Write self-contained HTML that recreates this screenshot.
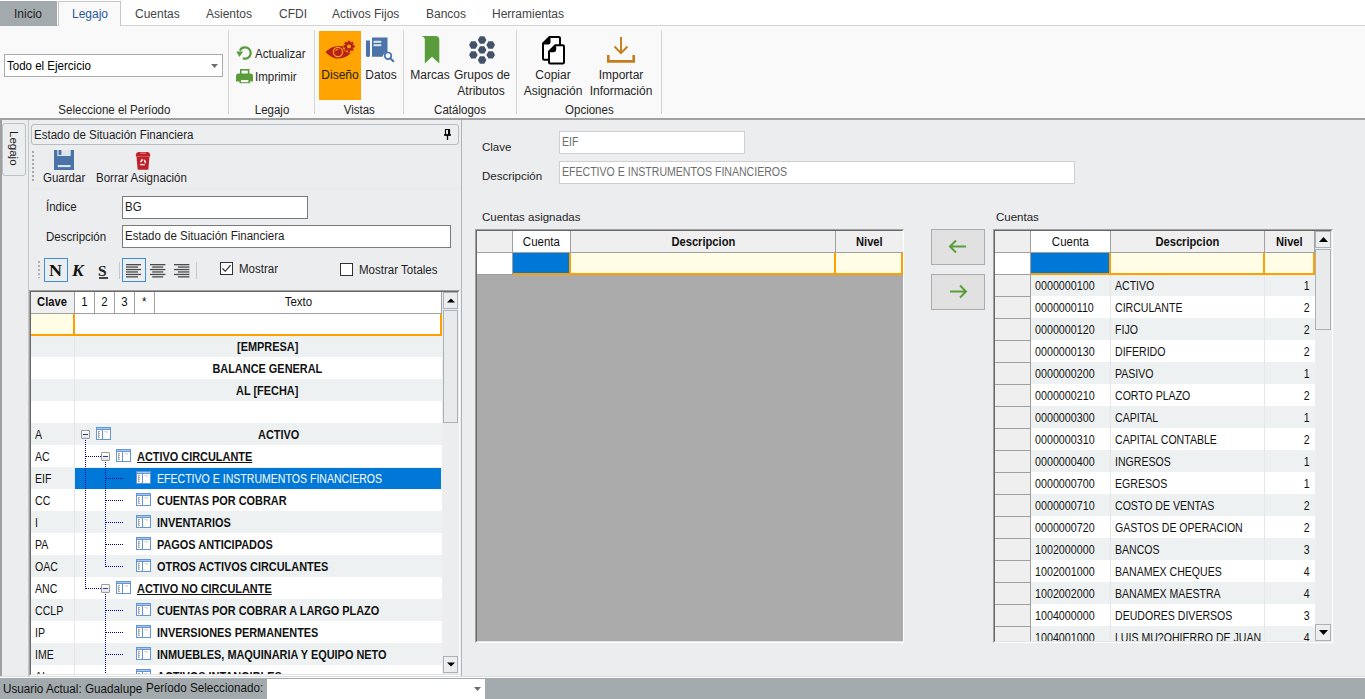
<!DOCTYPE html>
<html><head><meta charset="utf-8">
<style>
*{margin:0;padding:0;box-sizing:border-box}
html,body{width:1365px;height:699px;overflow:hidden;background:#ecedef;font-family:"Liberation Sans",sans-serif;font-size:11.5px;color:#000}
.a{position:absolute;white-space:nowrap}
.t{position:absolute;white-space:nowrap;line-height:14px}
</style></head><body>
<!-- TAB STRIP -->
<div class="a" style="left:0;top:0;width:1365px;height:26px;background:#fff"></div>
<div class="a" style="left:0;top:25px;width:1365px;height:1px;background:#d4d4d4"></div>
<div class="a" style="left:0;top:1px;width:57px;height:25px;background:#a3aaad"></div>
<div class="t" style="left:14px;top:7px;color:#1e1e1e;font-size:12px">Inicio</div>
<div class="a" style="left:58px;top:1px;width:63px;height:26px;background:#f9f9f9;border:1px solid #c6c6c6;border-bottom:none"></div>
<div class="t" style="left:72px;top:7px;color:#2b579a;font-size:12px">Legajo</div>
<div class="t" style="left:135px;top:7px;color:#444;font-size:12px">Cuentas</div>
<div class="t" style="left:206px;top:7px;color:#444;font-size:12px">Asientos</div>
<div class="t" style="left:279px;top:7px;color:#444;font-size:12px">CFDI</div>
<div class="t" style="left:332px;top:7px;color:#444;font-size:12px">Activos Fijos</div>
<div class="t" style="left:426px;top:7px;color:#444;font-size:12px">Bancos</div>
<div class="t" style="left:492px;top:7px;color:#444;font-size:12px">Herramientas</div>

<!-- RIBBON -->
<div class="a" style="left:0;top:26px;width:1365px;height:92px;background:#f9f9f9"></div>
<div class="a" style="left:0;top:118px;width:1365px;height:2px;background:#a0a0a0"></div>

<!-- ribbon group 1 -->
<div class="a" style="left:4px;top:54px;width:219px;height:23px;background:#fff;border:1px solid #ababab"></div>
<div class="t" style="left:7px;top:59px;font-size:12px"><span style="display:inline-block;transform:scaleX(0.96);transform-origin:0 0">Todo el Ejercicio</span></div>
<svg class="a" style="left:211px;top:64px" width="7" height="4"><path d="M0 0H7L3.5 4Z" fill="#6d6d6d"/></svg>
<div class="t" style="left:0;width:228px;text-align:center;top:103px;color:#262626;font-size:12px"><span style="display:inline-block;transform:scaleX(0.96);transform-origin:50% 0">Seleccione el Período</span></div>
<div class="a" style="left:228px;top:30px;width:1px;height:84px;background:#d5d5d5"></div>
<!-- group 2 -->
<svg class="a" style="left:236px;top:45px" width="17" height="16" viewBox="0 0 17 16"><path d="M3.83 5.59A5.7 5.7 0 1 1 6.81 13.26" fill="none" stroke="#5a9b3c" stroke-width="2.2"/><path d="M0.3 6.6H7.2L3.4 11.9Z" fill="#5a9b3c"/></svg>
<div class="t" style="left:255px;top:47px;color:#262626;font-size:12px"><span style="display:inline-block;transform:scaleX(0.96);transform-origin:0 0">Actualizar</span></div>
<svg class="a" style="left:236px;top:68px" width="17" height="16" viewBox="0 0 17 16"><rect x="4.8" y="1.8" width="7.8" height="5" fill="none" stroke="#5a9b3c" stroke-width="1.6"/><path d="M0 8Q0 5.6 2.4 5.6H14.6Q17 5.6 17 8V13.5H0Z" fill="#5a9b3c"/><rect x="3.5" y="10.8" width="10.5" height="4.4" fill="#5a9b3c"/><rect x="5" y="12" width="7.4" height="2.2" fill="#f9f9f9"/></svg>
<div class="t" style="left:255px;top:70px;color:#262626;font-size:12px"><span style="display:inline-block;transform:scaleX(0.96);transform-origin:0 0">Imprimir</span></div>
<div class="t" style="left:229px;width:86px;text-align:center;top:103px;color:#262626;font-size:12px"><span style="display:inline-block;transform:scaleX(0.96);transform-origin:50% 0">Legajo</span></div>
<div class="a" style="left:314px;top:30px;width:1px;height:84px;background:#d5d5d5"></div>
<!-- group 3 -->
<div class="a" style="left:319px;top:31px;width:42px;height:69px;background:#ffa400"></div>
<svg class="a" style="left:318px;top:32px" width="43" height="34" viewBox="0 0 43 34"><path d="M7.5 20C12 15.5 17 14 22 14C26 14 29 15.5 30 17L32.5 21.5C28 25.5 23 26.8 19.5 26.6C15 26.4 10.5 23.5 7.5 20Z" fill="#b5211f"/><circle cx="20" cy="20" r="4.6" fill="none" stroke="#ffa400" stroke-width="1.3"/><path d="M17.6 19.2A2.6 2.6 0 0 1 20.2 17.2" fill="none" stroke="#ffa400" stroke-width="1"/><circle cx="31" cy="14.4" r="6.2" fill="#ffa400"/><g fill="#b5211f"><rect x="29.7" y="8.8" width="2.6" height="3" transform="rotate(0 31 14.4)"/><rect x="29.7" y="8.8" width="2.6" height="3" transform="rotate(45 31 14.4)"/><rect x="29.7" y="8.8" width="2.6" height="3" transform="rotate(90 31 14.4)"/><rect x="29.7" y="8.8" width="2.6" height="3" transform="rotate(135 31 14.4)"/><rect x="29.7" y="8.8" width="2.6" height="3" transform="rotate(180 31 14.4)"/><rect x="29.7" y="8.8" width="2.6" height="3" transform="rotate(225 31 14.4)"/><rect x="29.7" y="8.8" width="2.6" height="3" transform="rotate(270 31 14.4)"/><rect x="29.7" y="8.8" width="2.6" height="3" transform="rotate(315 31 14.4)"/></g><circle cx="31" cy="14.4" r="4.2" fill="#b5211f"/><circle cx="31" cy="14.4" r="1.9" fill="#ffa400"/></svg>
<div class="t" style="left:290px;width:100px;text-align:center;top:68px;font-size:12px;color:#1e1e1e">Diseño</div>
<svg class="a" style="left:364px;top:36px" width="32" height="28" viewBox="0 0 32 28"><path d="M2 4.5H6V19.5Q6 21 4 21Q2 21 2 19.5Z" fill="#4a74a8"/><path d="M8 1.5H23.5V16.5A5.5 5.5 0 0 0 18.5 20.7H8Z" fill="#4a74a8"/><rect x="9.5" y="4.8" width="7.8" height="2" fill="#dfe6ef"/><rect x="9.5" y="8.2" width="7.8" height="2" fill="#dfe6ef"/><circle cx="24" cy="19.8" r="3.3" fill="none" stroke="#4a74a8" stroke-width="1.7"/><path d="M26.3 22.2L29.3 25.3" stroke="#4a74a8" stroke-width="2" stroke-linecap="round"/></svg>
<div class="t" style="left:331px;width:100px;text-align:center;top:68px;font-size:12px;color:#262626">Datos</div>
<div class="t" style="left:315px;width:88px;text-align:center;top:103px;color:#262626;font-size:12px"><span style="display:inline-block;transform:scaleX(0.96);transform-origin:50% 0">Vistas</span></div>
<div class="a" style="left:403px;top:30px;width:1px;height:84px;background:#d5d5d5"></div>
<!-- group 4 -->
<svg class="a" style="left:418px;top:33px" width="24" height="33" viewBox="0 0 24 33"><path d="M3 3H17.5Q21.3 3 21.3 6.8V30.5L14 23.8L6.8 30.5V6.5Q6.8 3.6 3 3Z" fill="#5a9b3c"/></svg>
<div class="t" style="left:380px;width:100px;text-align:center;top:68px;font-size:12px;color:#262626">Marcas</div>
<svg class="a" style="left:466px;top:33px" width="32" height="33" viewBox="0 0 32 33"><g fill="#435268"><path d="M11.80 7.00 L13.90 3.30 L18.30 3.30 L20.40 7.00 L18.30 10.70 L13.90 10.70Z"/><path d="M3.10 12.00 L5.20 8.30 L9.60 8.30 L11.70 12.00 L9.60 15.70 L5.20 15.70Z"/><path d="M20.40 12.00 L22.50 8.30 L26.90 8.30 L29.00 12.00 L26.90 15.70 L22.50 15.70Z"/><path d="M11.80 16.90 L13.90 13.20 L18.30 13.20 L20.40 16.90 L18.30 20.60 L13.90 20.60Z"/><path d="M3.10 21.90 L5.20 18.20 L9.60 18.20 L11.70 21.90 L9.60 25.60 L5.20 25.60Z"/><path d="M20.40 21.90 L22.50 18.20 L26.90 18.20 L29.00 21.90 L26.90 25.60 L22.50 25.60Z"/><path d="M11.80 27.00 L13.90 23.30 L18.30 23.30 L20.40 27.00 L18.30 30.70 L13.90 30.70Z"/></g></svg>
<div class="t" style="left:432px;width:100px;text-align:center;top:68px;font-size:12px;color:#262626">Grupos de</div>
<div class="t" style="left:431px;width:100px;text-align:center;top:84px;font-size:12px;color:#262626">Atributos</div>
<div class="t" style="left:404px;width:113px;text-align:center;top:103px;color:#262626;font-size:12px"><span style="display:inline-block;transform:scaleX(0.96);transform-origin:50% 0">Catálogos</span></div>
<div class="a" style="left:516px;top:30px;width:1px;height:84px;background:#d5d5d5"></div>
<!-- group 5 -->
<svg class="a" style="left:540px;top:34px" width="26" height="32" viewBox="0 0 26 32"><path d="M9.5 3H18.8Q20 3 20 4.2V24.6Q20 25.8 18.8 25.8H4.2Q3 25.8 3 24.6V9.5Z" fill="#fff" stroke="#000" stroke-width="2" stroke-linejoin="round"/><path d="M2.3 10.5L10.5 2.3V8.3Q10.5 10.5 8.3 10.5Z" fill="#000"/><path d="M15.3 11.2H22.8Q24 11.2 24 12.4V28.2Q24 29.4 22.8 29.4H10.2Q9 29.4 9 28.2V17.4Z" fill="#fff" stroke="#000" stroke-width="2" stroke-linejoin="round"/><path d="M8.3 18.2L16.2 10.4V15.8Q16.2 18.2 13.8 18.2Z" fill="#000"/></svg>
<div class="t" style="left:503px;width:100px;text-align:center;top:68px;font-size:12px;color:#262626">Copiar</div>
<div class="t" style="left:503px;width:100px;text-align:center;top:84px;font-size:12px;color:#262626">Asignación</div>
<svg class="a" style="left:604px;top:34px" width="34" height="32" viewBox="0 0 34 32"><path d="M17 3V19.5M10.5 12.5L17 19.2L23.5 12.5" fill="none" stroke="#c57c1c" stroke-width="1.9"/><path d="M4.3 21V27.4H29.7V21" fill="none" stroke="#c57c1c" stroke-width="2.6"/></svg>
<div class="t" style="left:571px;width:100px;text-align:center;top:68px;font-size:12px;color:#262626">Importar</div>
<div class="t" style="left:571px;width:100px;text-align:center;top:84px;font-size:12px;color:#262626">Información</div>
<div class="t" style="left:517px;width:145px;text-align:center;top:103px;color:#262626;font-size:12px"><span style="display:inline-block;transform:scaleX(0.96);transform-origin:50% 0">Opciones</span></div>
<div class="a" style="left:661px;top:30px;width:1px;height:84px;background:#d5d5d5"></div>

<!-- LEFT STRIP -->
<div class="a" style="left:0;top:120px;width:2px;height:557px;background:#a0a0a0"></div>
<div class="a" style="left:2px;top:120px;width:26px;height:557px;background:#ecedef"></div>
<div class="a" style="left:2px;top:123px;width:24px;height:53px;background:#ecedef;border:1px solid #b9c0c6;border-radius:3px"></div>
<div class="t" style="left:7px;top:131px;width:14px;height:40px;"><div style="transform:rotate(90deg);transform-origin:0 0;position:absolute;left:14px;top:0;font-size:11.5px;line-height:14px;color:#1e1e1e">Legajo</div></div>
<div class="a" style="left:28px;top:120px;width:1px;height:557px;background:#c4c8cc"></div>
<!-- LEFT PANEL -->
<div class="a" style="left:29px;top:120px;width:432px;height:557px;background:#ecedef"></div>
<div class="a" style="left:461px;top:120px;width:1px;height:557px;background:#aeb4bb"></div>
<div class="a" style="left:31px;top:124px;width:428px;height:21px;border:1px solid #b5bcc3;border-radius:3px;background:#eceef0"></div>
<div class="t" style="left:34px;top:128px;color:#1e1e1e;font-size:12px"><span style="display:inline-block;transform:scaleX(0.96);transform-origin:0 0">Estado de Situación Financiera</span></div>
<svg class="a" style="left:444px;top:129px" width="7" height="11" viewBox="0 0 7 11"><path d="M1.5 0.5H5.5V6H1.5Z" fill="none" stroke="#000" stroke-width="1.2"/><path d="M0 6H7M3.5 6V11" stroke="#000" stroke-width="1.3"/><rect x="4" y="1" width="1.5" height="5" fill="#000"/></svg>
<!-- toolbar -->
<div class="a" style="left:32px;top:151px;width:2px;height:31px;background:repeating-linear-gradient(#a8a8a8 0 2px,transparent 2px 4px)"></div>
<svg class="a" style="left:54px;top:150px" width="20" height="20" viewBox="0 0 20 20"><rect x="0" y="0" width="20" height="20" fill="#4a74a8"/><rect x="3.3" y="0" width="13.4" height="6" fill="#dde4ec"/><rect x="4.6" y="0" width="2.8" height="5" fill="#4a74a8"/><rect x="3.8" y="15" width="12.7" height="2.1" fill="#dde4ec"/></svg>
<svg class="a" style="left:135px;top:150px" width="16" height="20" viewBox="0 0 16 20"><path d="M1.5 6.5H14.5L13.3 19.8H2.7Z" fill="#c0202a"/><path d="M0.8 5.5Q0.8 2.2 4 2H12Q15.2 2.2 15.2 5.5V6.6H0.8Z" fill="#c0202a"/><rect x="5" y="2.6" width="6" height="1" fill="#e88a8e"/><g fill="none" stroke="#fff" stroke-width="1.3"><path d="M5.6 12.2L7 9.9M9.2 9.9L10.6 12.4M9.8 14.6H6.2"/></g><g fill="#fff"><path d="M6.2 9.3L8.3 9.3L7.4 11Z"/><path d="M11.3 13.3L10.3 11.2L9.3 12.9Z"/><path d="M5 14.6L6.2 13.2L6.2 16Z"/></g></svg>
<div class="t" style="left:43px;top:171px;color:#1e1e1e;font-size:12px"><span style="display:inline-block;transform:scaleX(0.96);transform-origin:0 0">Guardar</span></div>
<div class="t" style="left:96px;top:171px;color:#1e1e1e;font-size:12px"><span style="display:inline-block;transform:scaleX(0.96);transform-origin:0 0">Borrar Asignación</span></div>
<div class="a" style="left:31px;top:188px;width:427px;height:1px;background:#e4e6e8"></div>
<!-- form -->
<div class="t" style="left:46px;top:200px;color:#1e1e1e;font-size:12px"><span style="display:inline-block;transform:scaleX(0.96);transform-origin:0 0">Índice</span></div>
<div class="a" style="left:122px;top:196px;width:186px;height:23px;background:#fff;border:1px solid #7a7a7a"></div>
<div class="t" style="left:125px;top:200px;color:#1e1e1e;font-size:12px"><span style="display:inline-block;transform:scaleX(0.96);transform-origin:0 0">BG</span></div>
<div class="t" style="left:46px;top:230px;color:#1e1e1e;font-size:12px"><span style="display:inline-block;transform:scaleX(0.96);transform-origin:0 0">Descripción</span></div>
<div class="a" style="left:122px;top:225px;width:329px;height:23px;background:#fff;border:1px solid #7a7a7a"></div>
<div class="t" style="left:125px;top:229px;color:#1e1e1e;font-size:12px"><span style="display:inline-block;transform:scaleX(0.96);transform-origin:0 0">Estado de Situación Financiera</span></div>
<!-- format toolbar -->
<div class="a" style="left:38px;top:261px;width:2px;height:17px;background:repeating-linear-gradient(#b0b0b0 0 2px,transparent 2px 4px)"></div>
<div class="a" style="left:44px;top:258px;width:24px;height:24px;border:1px solid #3d8ee0"></div>
<div class="t" style="left:49px;top:263px;font-family:'Liberation Serif',serif;font-weight:bold;font-size:16px;line-height:16px;color:#111;transform:scaleX(1.12);transform-origin:0 0">N</div>
<div class="t" style="left:72px;top:263px;font-family:'Liberation Serif',serif;font-weight:bold;font-style:italic;font-size:16px;line-height:16px;color:#111;transform:scaleX(1.1);transform-origin:0 0">K</div>
<div class="t" style="left:98px;top:263px;font-family:'Liberation Serif',serif;font-weight:bold;font-size:15.5px;line-height:16px;color:#222">S</div><div class="a" style="left:99px;top:277px;width:9px;height:1.5px;background:#444"></div>
<div class="a" style="left:119px;top:262px;width:1px;height:17px;background:#c8c8c8"></div>
<div class="a" style="left:122px;top:258px;width:24px;height:24px;border:1px solid #3d8ee0"></div>
<svg class="a" style="left:125px;top:264px" width="70" height="14" viewBox="0 0 70 14"><g fill="#4a4a4a"><rect x="1" y="0" width="15" height="1.3"/><rect x="25.0" y="0" width="15.4" height="1.3"/><rect x="49.00000000000001" y="0" width="15.4" height="1.3"/><rect x="1" y="2.4" width="12" height="1.3"/><rect x="27.2" y="2.4" width="11" height="1.3"/><rect x="52.900000000000006" y="2.4" width="11.5" height="1.3"/><rect x="1" y="4.9" width="15" height="1.3"/><rect x="25.0" y="4.9" width="15.4" height="1.3"/><rect x="49.00000000000001" y="4.9" width="15.4" height="1.3"/><rect x="1" y="7.3" width="12" height="1.3"/><rect x="27.2" y="7.3" width="11" height="1.3"/><rect x="52.900000000000006" y="7.3" width="11.5" height="1.3"/><rect x="1" y="9.8" width="15" height="1.3"/><rect x="25.0" y="9.8" width="15.4" height="1.3"/><rect x="49.00000000000001" y="9.8" width="15.4" height="1.3"/><rect x="1" y="12.2" width="12" height="1.3"/><rect x="27.2" y="12.2" width="11" height="1.3"/><rect x="52.900000000000006" y="12.2" width="11.5" height="1.3"/></g></svg>
<div class="a" style="left:196px;top:262px;width:1px;height:17px;background:#c8c8c8"></div>
<div class="a" style="left:220px;top:262px;width:13px;height:13px;background:#fff;border:1px solid #333"></div>
<svg class="a" style="left:222px;top:264px" width="9" height="9" viewBox="0 0 9 9"><path d="M0.5 4.5L3.3 7.3L8.5 1.2" fill="none" stroke="#222" stroke-width="1.1"/></svg>
<div class="t" style="left:239px;top:262px;color:#1e1e1e;font-size:12px"><span style="display:inline-block;transform:scaleX(0.96);transform-origin:0 0">Mostrar</span></div>
<div class="a" style="left:340px;top:263px;width:13px;height:13px;background:#fff;border:1px solid #333"></div>
<div class="t" style="left:359px;top:263px;color:#1e1e1e;font-size:12px"><span style="display:inline-block;transform:scaleX(0.96);transform-origin:0 0">Mostrar Totales</span></div>
<div class="a" style="left:29px;top:290px;width:431px;height:386px;background:#fff;border-top:1px solid #a0a0a0;border-left:1px solid #a0a0a0;border-right:1px solid #fff;border-bottom:1px solid #fff"></div>
<div class="a" style="left:30px;top:291px;width:429px;height:384px;border-top:1px solid #696969;border-left:1px solid #696969;border-right:1px solid #e3e3e3;border-bottom:1px solid #e3e3e3"></div>
<div class="a" style="left:31px;top:292px;width:43px;height:21px;background:#efefef;"></div>
<div class="a" style="left:74px;top:292px;width:1px;height:21px;background:#a0a0a0;"></div>
<div class="a" style="left:94px;top:292px;width:1px;height:21px;background:#a0a0a0;"></div>
<div class="a" style="left:114px;top:292px;width:1px;height:21px;background:#a0a0a0;"></div>
<div class="a" style="left:134px;top:292px;width:1px;height:21px;background:#a0a0a0;"></div>
<div class="a" style="left:154px;top:292px;width:1px;height:21px;background:#a0a0a0;"></div>
<div class="a" style="left:441px;top:292px;width:1px;height:21px;background:#a0a0a0;"></div>
<div class="a" style="left:31px;top:313px;width:411px;height:1px;background:#a0a0a0;"></div>
<div class="t" style="left:31px;width:43px;text-align:center;top:295px;font-size:12px;font-weight:bold;color:#111"><span style="display:inline-block;transform:scaleX(0.93);transform-origin:50% 0;">Clave</span></div>
<div class="t" style="left:75px;width:19px;text-align:center;top:295px;font-size:12px;color:#111"><span style="display:inline-block;transform:scaleX(0.955);transform-origin:50% 0;">1</span></div>
<div class="t" style="left:95px;width:19px;text-align:center;top:295px;font-size:12px;color:#111"><span style="display:inline-block;transform:scaleX(0.955);transform-origin:50% 0;">2</span></div>
<div class="t" style="left:115px;width:19px;text-align:center;top:295px;font-size:12px;color:#111"><span style="display:inline-block;transform:scaleX(0.955);transform-origin:50% 0;">3</span></div>
<div class="t" style="left:135px;width:19px;text-align:center;top:295px;font-size:12px;color:#111"><span style="display:inline-block;transform:scaleX(0.955);transform-origin:50% 0;">*</span></div>
<div class="t" style="left:155px;width:286px;text-align:center;top:295px;font-size:12px;color:#111"><span style="display:inline-block;transform:scaleX(0.955);transform-origin:50% 0;">Texto</span></div>
<div class="a" style="left:31px;top:314px;width:43px;height:21px;background:#fffde6;"></div>
<div class="a" style="left:73px;top:314px;width:2px;height:22px;background:#ffa000;"></div>
<div class="a" style="left:440px;top:314px;width:2px;height:22px;background:#ffa000;"></div>
<div class="a" style="left:442px;top:292px;width:17px;height:382px;background:#ecedef;"></div>
<div class="a" style="left:443px;top:292px;width:15px;height:17px;background:#ecedef;border:1px solid #a9b1b9"></div>
<svg class="a" style="left:447px;top:298px" width="8" height="5"><path d="M0 4.5H8L4 0.5Z" fill="#000"/></svg>
<div class="a" style="left:443px;top:310px;width:15px;height:113px;background:#e8eaec;border:1px solid #a9b1b9"></div>
<div class="a" style="left:443px;top:656px;width:15px;height:17px;background:#ecedef;border:1px solid #a9b1b9"></div>
<svg class="a" style="left:447px;top:662px" width="8" height="5"><path d="M0 0.5H8L4 4.5Z" fill="#000"/></svg>
<div class="a" style="left:31px;top:335px;width:411px;height:339px;overflow:hidden">
<div class="a" style="left:0px;top:0px;width:411px;height:22px;background:#eef1f2;"></div>
<div class="a" style="left:43px;top:0px;width:1px;height:22px;background:#e4e6e8;"></div>
<div class="t" style="left:63px;width:347px;text-align:center;top:5px;font-size:12px;font-weight:bold;color:#111"><span style="display:inline-block;transform:scaleX(0.91);transform-origin:50% 0;">[EMPRESA]</span></div>
<div class="a" style="left:0px;top:22px;width:411px;height:22px;background:#fff;"></div>
<div class="a" style="left:43px;top:22px;width:1px;height:22px;background:#e4e6e8;"></div>
<div class="t" style="left:63px;width:347px;text-align:center;top:27px;font-size:12px;font-weight:bold;color:#111"><span style="display:inline-block;transform:scaleX(0.91);transform-origin:50% 0;">BALANCE GENERAL</span></div>
<div class="a" style="left:0px;top:44px;width:411px;height:22px;background:#eef1f2;"></div>
<div class="a" style="left:43px;top:44px;width:1px;height:22px;background:#e4e6e8;"></div>
<div class="t" style="left:63px;width:347px;text-align:center;top:49px;font-size:12px;font-weight:bold;color:#111"><span style="display:inline-block;transform:scaleX(0.91);transform-origin:50% 0;">AL [FECHA]</span></div>
<div class="a" style="left:0px;top:66px;width:411px;height:22px;background:#fff;"></div>
<div class="a" style="left:43px;top:66px;width:1px;height:22px;background:#e4e6e8;"></div>
<div class="a" style="left:0px;top:88px;width:411px;height:22px;background:#eef1f2;"></div>
<div class="a" style="left:43px;top:88px;width:1px;height:22px;background:#e4e6e8;"></div>
<div class="t" style="left:4px;top:93px;font-size:12px;color:#111"><span style="display:inline-block;transform:scaleX(0.88);transform-origin:0 0;">A</span></div>
<svg class="a" style="left:65px;top:92px" width="15" height="13" viewBox="0 0 15 13" shape-rendering="crispEdges"><rect x="0" y="0" width="15" height="13" fill="#6396d6"/><rect x="1" y="1" width="13" height="1" fill="#a8c6ee"/><rect x="1" y="3" width="5" height="9" fill="#fff"/><rect x="7" y="3" width="7" height="9" fill="#fff"/><path d="M2 4H4M2 4V11M3 6H4M3 8H4M3 10H4" stroke="#ababab" stroke-width="1" fill="none"/><path d="M8 4H12M10 5H12" stroke="#e0e0e0" stroke-width="1"/></svg>
<div class="t" style="left:86px;width:324px;text-align:center;top:93px;font-size:12px;font-weight:bold;color:#111"><span style="display:inline-block;transform:scaleX(0.91);transform-origin:50% 0;">ACTIVO</span></div>
<div class="a" style="left:0px;top:110px;width:411px;height:22px;background:#fff;"></div>
<div class="a" style="left:43px;top:110px;width:1px;height:22px;background:#e4e6e8;"></div>
<div class="t" style="left:4px;top:115px;font-size:12px;color:#111"><span style="display:inline-block;transform:scaleX(0.88);transform-origin:0 0;">AC</span></div>
<svg class="a" style="left:85px;top:114px" width="15" height="13" viewBox="0 0 15 13" shape-rendering="crispEdges"><rect x="0" y="0" width="15" height="13" fill="#6396d6"/><rect x="1" y="1" width="13" height="1" fill="#a8c6ee"/><rect x="1" y="3" width="5" height="9" fill="#fff"/><rect x="7" y="3" width="7" height="9" fill="#fff"/><path d="M2 4H4M2 4V11M3 6H4M3 8H4M3 10H4" stroke="#ababab" stroke-width="1" fill="none"/><path d="M8 4H12M10 5H12" stroke="#e0e0e0" stroke-width="1"/></svg>
<div class="t" style="left:106px;top:115px;font-size:12px;font-weight:bold;color:#111"><span style="display:inline-block;transform:scaleX(0.91);transform-origin:0 0;text-decoration:underline">ACTIVO CIRCULANTE</span></div>
<div class="a" style="left:0px;top:132px;width:411px;height:22px;background:#eef1f2;"></div>
<div class="a" style="left:43px;top:132px;width:1px;height:22px;background:#e4e6e8;"></div>
<div class="t" style="left:4px;top:137px;font-size:12px;color:#111"><span style="display:inline-block;transform:scaleX(0.88);transform-origin:0 0;">EIF</span></div>
<div class="a" style="left:44px;top:133px;width:366px;height:21px;background:#0078d7;"></div>
<svg class="a" style="left:105px;top:136px" width="15" height="13" viewBox="0 0 15 13" shape-rendering="crispEdges"><rect x="0" y="0" width="15" height="13" fill="#6396d6"/><rect x="1" y="1" width="13" height="1" fill="#a8c6ee"/><rect x="1" y="3" width="5" height="9" fill="#fff"/><rect x="7" y="3" width="7" height="9" fill="#fff"/><path d="M2 4H4M2 4V11M3 6H4M3 8H4M3 10H4" stroke="#ababab" stroke-width="1" fill="none"/><path d="M8 4H12M10 5H12" stroke="#e0e0e0" stroke-width="1"/></svg>
<div class="t" style="left:126px;top:137px;font-size:12px;color:#fff"><span style="display:inline-block;transform:scaleX(0.88);transform-origin:0 0;">EFECTIVO E INSTRUMENTOS FINANCIEROS</span></div>
<div class="a" style="left:0px;top:154px;width:411px;height:22px;background:#fff;"></div>
<div class="a" style="left:43px;top:154px;width:1px;height:22px;background:#e4e6e8;"></div>
<div class="t" style="left:4px;top:159px;font-size:12px;color:#111"><span style="display:inline-block;transform:scaleX(0.88);transform-origin:0 0;">CC</span></div>
<svg class="a" style="left:105px;top:158px" width="15" height="13" viewBox="0 0 15 13" shape-rendering="crispEdges"><rect x="0" y="0" width="15" height="13" fill="#6396d6"/><rect x="1" y="1" width="13" height="1" fill="#a8c6ee"/><rect x="1" y="3" width="5" height="9" fill="#fff"/><rect x="7" y="3" width="7" height="9" fill="#fff"/><path d="M2 4H4M2 4V11M3 6H4M3 8H4M3 10H4" stroke="#ababab" stroke-width="1" fill="none"/><path d="M8 4H12M10 5H12" stroke="#e0e0e0" stroke-width="1"/></svg>
<div class="t" style="left:126px;top:159px;font-size:12px;font-weight:bold;color:#111"><span style="display:inline-block;transform:scaleX(0.91);transform-origin:0 0;">CUENTAS POR COBRAR</span></div>
<div class="a" style="left:0px;top:176px;width:411px;height:22px;background:#eef1f2;"></div>
<div class="a" style="left:43px;top:176px;width:1px;height:22px;background:#e4e6e8;"></div>
<div class="t" style="left:4px;top:181px;font-size:12px;color:#111"><span style="display:inline-block;transform:scaleX(0.88);transform-origin:0 0;">I</span></div>
<svg class="a" style="left:105px;top:180px" width="15" height="13" viewBox="0 0 15 13" shape-rendering="crispEdges"><rect x="0" y="0" width="15" height="13" fill="#6396d6"/><rect x="1" y="1" width="13" height="1" fill="#a8c6ee"/><rect x="1" y="3" width="5" height="9" fill="#fff"/><rect x="7" y="3" width="7" height="9" fill="#fff"/><path d="M2 4H4M2 4V11M3 6H4M3 8H4M3 10H4" stroke="#ababab" stroke-width="1" fill="none"/><path d="M8 4H12M10 5H12" stroke="#e0e0e0" stroke-width="1"/></svg>
<div class="t" style="left:126px;top:181px;font-size:12px;font-weight:bold;color:#111"><span style="display:inline-block;transform:scaleX(0.91);transform-origin:0 0;">INVENTARIOS</span></div>
<div class="a" style="left:0px;top:198px;width:411px;height:22px;background:#fff;"></div>
<div class="a" style="left:43px;top:198px;width:1px;height:22px;background:#e4e6e8;"></div>
<div class="t" style="left:4px;top:203px;font-size:12px;color:#111"><span style="display:inline-block;transform:scaleX(0.88);transform-origin:0 0;">PA</span></div>
<svg class="a" style="left:105px;top:202px" width="15" height="13" viewBox="0 0 15 13" shape-rendering="crispEdges"><rect x="0" y="0" width="15" height="13" fill="#6396d6"/><rect x="1" y="1" width="13" height="1" fill="#a8c6ee"/><rect x="1" y="3" width="5" height="9" fill="#fff"/><rect x="7" y="3" width="7" height="9" fill="#fff"/><path d="M2 4H4M2 4V11M3 6H4M3 8H4M3 10H4" stroke="#ababab" stroke-width="1" fill="none"/><path d="M8 4H12M10 5H12" stroke="#e0e0e0" stroke-width="1"/></svg>
<div class="t" style="left:126px;top:203px;font-size:12px;font-weight:bold;color:#111"><span style="display:inline-block;transform:scaleX(0.91);transform-origin:0 0;">PAGOS ANTICIPADOS</span></div>
<div class="a" style="left:0px;top:220px;width:411px;height:22px;background:#eef1f2;"></div>
<div class="a" style="left:43px;top:220px;width:1px;height:22px;background:#e4e6e8;"></div>
<div class="t" style="left:4px;top:225px;font-size:12px;color:#111"><span style="display:inline-block;transform:scaleX(0.88);transform-origin:0 0;">OAC</span></div>
<svg class="a" style="left:105px;top:224px" width="15" height="13" viewBox="0 0 15 13" shape-rendering="crispEdges"><rect x="0" y="0" width="15" height="13" fill="#6396d6"/><rect x="1" y="1" width="13" height="1" fill="#a8c6ee"/><rect x="1" y="3" width="5" height="9" fill="#fff"/><rect x="7" y="3" width="7" height="9" fill="#fff"/><path d="M2 4H4M2 4V11M3 6H4M3 8H4M3 10H4" stroke="#ababab" stroke-width="1" fill="none"/><path d="M8 4H12M10 5H12" stroke="#e0e0e0" stroke-width="1"/></svg>
<div class="t" style="left:126px;top:225px;font-size:12px;font-weight:bold;color:#111"><span style="display:inline-block;transform:scaleX(0.91);transform-origin:0 0;">OTROS ACTIVOS CIRCULANTES</span></div>
<div class="a" style="left:0px;top:242px;width:411px;height:22px;background:#fff;"></div>
<div class="a" style="left:43px;top:242px;width:1px;height:22px;background:#e4e6e8;"></div>
<div class="t" style="left:4px;top:247px;font-size:12px;color:#111"><span style="display:inline-block;transform:scaleX(0.88);transform-origin:0 0;">ANC</span></div>
<svg class="a" style="left:85px;top:246px" width="15" height="13" viewBox="0 0 15 13" shape-rendering="crispEdges"><rect x="0" y="0" width="15" height="13" fill="#6396d6"/><rect x="1" y="1" width="13" height="1" fill="#a8c6ee"/><rect x="1" y="3" width="5" height="9" fill="#fff"/><rect x="7" y="3" width="7" height="9" fill="#fff"/><path d="M2 4H4M2 4V11M3 6H4M3 8H4M3 10H4" stroke="#ababab" stroke-width="1" fill="none"/><path d="M8 4H12M10 5H12" stroke="#e0e0e0" stroke-width="1"/></svg>
<div class="t" style="left:106px;top:247px;font-size:12px;font-weight:bold;color:#111"><span style="display:inline-block;transform:scaleX(0.91);transform-origin:0 0;text-decoration:underline">ACTIVO NO CIRCULANTE</span></div>
<div class="a" style="left:0px;top:264px;width:411px;height:22px;background:#eef1f2;"></div>
<div class="a" style="left:43px;top:264px;width:1px;height:22px;background:#e4e6e8;"></div>
<div class="t" style="left:4px;top:269px;font-size:12px;color:#111"><span style="display:inline-block;transform:scaleX(0.88);transform-origin:0 0;">CCLP</span></div>
<svg class="a" style="left:105px;top:268px" width="15" height="13" viewBox="0 0 15 13" shape-rendering="crispEdges"><rect x="0" y="0" width="15" height="13" fill="#6396d6"/><rect x="1" y="1" width="13" height="1" fill="#a8c6ee"/><rect x="1" y="3" width="5" height="9" fill="#fff"/><rect x="7" y="3" width="7" height="9" fill="#fff"/><path d="M2 4H4M2 4V11M3 6H4M3 8H4M3 10H4" stroke="#ababab" stroke-width="1" fill="none"/><path d="M8 4H12M10 5H12" stroke="#e0e0e0" stroke-width="1"/></svg>
<div class="t" style="left:126px;top:269px;font-size:12px;font-weight:bold;color:#111"><span style="display:inline-block;transform:scaleX(0.91);transform-origin:0 0;">CUENTAS POR COBRAR A LARGO PLAZO</span></div>
<div class="a" style="left:0px;top:286px;width:411px;height:22px;background:#fff;"></div>
<div class="a" style="left:43px;top:286px;width:1px;height:22px;background:#e4e6e8;"></div>
<div class="t" style="left:4px;top:291px;font-size:12px;color:#111"><span style="display:inline-block;transform:scaleX(0.88);transform-origin:0 0;">IP</span></div>
<svg class="a" style="left:105px;top:290px" width="15" height="13" viewBox="0 0 15 13" shape-rendering="crispEdges"><rect x="0" y="0" width="15" height="13" fill="#6396d6"/><rect x="1" y="1" width="13" height="1" fill="#a8c6ee"/><rect x="1" y="3" width="5" height="9" fill="#fff"/><rect x="7" y="3" width="7" height="9" fill="#fff"/><path d="M2 4H4M2 4V11M3 6H4M3 8H4M3 10H4" stroke="#ababab" stroke-width="1" fill="none"/><path d="M8 4H12M10 5H12" stroke="#e0e0e0" stroke-width="1"/></svg>
<div class="t" style="left:126px;top:291px;font-size:12px;font-weight:bold;color:#111"><span style="display:inline-block;transform:scaleX(0.91);transform-origin:0 0;">INVERSIONES PERMANENTES</span></div>
<div class="a" style="left:0px;top:308px;width:411px;height:22px;background:#eef1f2;"></div>
<div class="a" style="left:43px;top:308px;width:1px;height:22px;background:#e4e6e8;"></div>
<div class="t" style="left:4px;top:313px;font-size:12px;color:#111"><span style="display:inline-block;transform:scaleX(0.88);transform-origin:0 0;">IME</span></div>
<svg class="a" style="left:105px;top:312px" width="15" height="13" viewBox="0 0 15 13" shape-rendering="crispEdges"><rect x="0" y="0" width="15" height="13" fill="#6396d6"/><rect x="1" y="1" width="13" height="1" fill="#a8c6ee"/><rect x="1" y="3" width="5" height="9" fill="#fff"/><rect x="7" y="3" width="7" height="9" fill="#fff"/><path d="M2 4H4M2 4V11M3 6H4M3 8H4M3 10H4" stroke="#ababab" stroke-width="1" fill="none"/><path d="M8 4H12M10 5H12" stroke="#e0e0e0" stroke-width="1"/></svg>
<div class="t" style="left:126px;top:313px;font-size:12px;font-weight:bold;color:#111"><span style="display:inline-block;transform:scaleX(0.91);transform-origin:0 0;">INMUEBLES, MAQUINARIA Y EQUIPO NETO</span></div>
<div class="a" style="left:0px;top:330px;width:411px;height:22px;background:#fff;"></div>
<div class="a" style="left:43px;top:330px;width:1px;height:22px;background:#e4e6e8;"></div>
<div class="t" style="left:4px;top:335px;font-size:12px;color:#111"><span style="display:inline-block;transform:scaleX(0.88);transform-origin:0 0;">AI</span></div>
<svg class="a" style="left:105px;top:334px" width="15" height="13" viewBox="0 0 15 13" shape-rendering="crispEdges"><rect x="0" y="0" width="15" height="13" fill="#6396d6"/><rect x="1" y="1" width="13" height="1" fill="#a8c6ee"/><rect x="1" y="3" width="5" height="9" fill="#fff"/><rect x="7" y="3" width="7" height="9" fill="#fff"/><path d="M2 4H4M2 4V11M3 6H4M3 8H4M3 10H4" stroke="#ababab" stroke-width="1" fill="none"/><path d="M8 4H12M10 5H12" stroke="#e0e0e0" stroke-width="1"/></svg>
<div class="t" style="left:126px;top:335px;font-size:12px;font-weight:bold;color:#111"><span style="display:inline-block;transform:scaleX(0.91);transform-origin:0 0;">ACTIVOS INTANGIBLES</span></div>
</div>
<div class="a" style="left:31px;top:334px;width:411px;height:2px;background:#ffa000;"></div>
<div class="a" style="left:85px;top:440px;width:1px;height:149px;background:repeating-linear-gradient(#000090 0 1px,transparent 1px 2px)"></div>
<div class="a" style="left:86px;top:456px;width:15px;height:1px;background:repeating-linear-gradient(90deg,#000090 0 1px,transparent 1px 2px)"></div>
<div class="a" style="left:105px;top:462px;width:1px;height:105px;background:repeating-linear-gradient(#000090 0 1px,transparent 1px 2px)"></div>
<div class="a" style="left:106px;top:478px;width:18px;height:1px;background:repeating-linear-gradient(90deg,#000090 0 1px,transparent 1px 2px)"></div>
<div class="a" style="left:106px;top:500px;width:18px;height:1px;background:repeating-linear-gradient(90deg,#000090 0 1px,transparent 1px 2px)"></div>
<div class="a" style="left:106px;top:522px;width:18px;height:1px;background:repeating-linear-gradient(90deg,#000090 0 1px,transparent 1px 2px)"></div>
<div class="a" style="left:106px;top:544px;width:18px;height:1px;background:repeating-linear-gradient(90deg,#000090 0 1px,transparent 1px 2px)"></div>
<div class="a" style="left:106px;top:566px;width:18px;height:1px;background:repeating-linear-gradient(90deg,#000090 0 1px,transparent 1px 2px)"></div>
<div class="a" style="left:86px;top:588px;width:15px;height:1px;background:repeating-linear-gradient(90deg,#000090 0 1px,transparent 1px 2px)"></div>
<div class="a" style="left:105px;top:594px;width:1px;height:80px;background:repeating-linear-gradient(#000090 0 1px,transparent 1px 2px)"></div>
<div class="a" style="left:106px;top:610px;width:18px;height:1px;background:repeating-linear-gradient(90deg,#000090 0 1px,transparent 1px 2px)"></div>
<div class="a" style="left:106px;top:632px;width:18px;height:1px;background:repeating-linear-gradient(90deg,#000090 0 1px,transparent 1px 2px)"></div>
<div class="a" style="left:106px;top:654px;width:18px;height:1px;background:repeating-linear-gradient(90deg,#000090 0 1px,transparent 1px 2px)"></div>
<div class="a" style="left:106px;top:676px;width:18px;height:1px;background:repeating-linear-gradient(90deg,#000090 0 1px,transparent 1px 2px)"></div>
<div class="a" style="left:81px;top:430px;width:9px;height:9px;border:1px solid #9a9a9a;background:linear-gradient(#fff,#e4e4e4);border-radius:1px"></div>
<div class="a" style="left:83px;top:434px;width:5px;height:1px;background:#2a3a9a;"></div>
<div class="a" style="left:101px;top:452px;width:9px;height:9px;border:1px solid #9a9a9a;background:linear-gradient(#fff,#e4e4e4);border-radius:1px"></div>
<div class="a" style="left:103px;top:456px;width:5px;height:1px;background:#2a3a9a;"></div>
<div class="a" style="left:101px;top:584px;width:9px;height:9px;border:1px solid #9a9a9a;background:linear-gradient(#fff,#e4e4e4);border-radius:1px"></div>
<div class="a" style="left:103px;top:588px;width:5px;height:1px;background:#2a3a9a;"></div>
<div class="a" style="left:0px;top:676px;width:1365px;height:1px;background:#dcdcdc;"></div>
<div class="a" style="left:0px;top:677px;width:1365px;height:1px;background:#fff;"></div>
<div class="a" style="left:0px;top:678px;width:1365px;height:21px;background:#a3aaad;"></div>
<div class="t" style="left:3px;top:682px;font-size:12px;color:#111"><span style="display:inline-block;transform:scaleX(0.975);transform-origin:0 0;">Usuario Actual: Guadalupe</span></div>
<div class="t" style="left:146px;top:681px;font-size:12px;color:#111"><span style="display:inline-block;transform:scaleX(0.97);transform-origin:0 0;">Período Seleccionado:</span></div>
<div class="a" style="left:267px;top:679px;width:218px;height:20px;background:#fff;"></div>
<svg class="a" style="left:474px;top:687px" width="7" height="4"><path d="M0 0H7L3.5 4Z" fill="#6d6d6d"/></svg>
<div class="t" style="left:482px;top:140px;color:#1e1e1e">Clave</div>
<div class="a" style="left:559px;top:131px;width:186px;height:23px;background:#fff;border:1px solid #cfcfcf"></div>
<div class="t" style="left:562px;top:135px;font-size:12px;color:#6d6d6d"><span style="display:inline-block;transform:scaleX(0.88);transform-origin:0 0;">EIF</span></div>
<div class="t" style="left:482px;top:169px;color:#1e1e1e">Descripción</div>
<div class="a" style="left:559px;top:161px;width:516px;height:23px;background:#fff;border:1px solid #cfcfcf"></div>
<div class="t" style="left:562px;top:165px;font-size:12px;color:#6d6d6d"><span style="display:inline-block;transform:scaleX(0.88);transform-origin:0 0;">EFECTIVO E INSTRUMENTOS FINANCIEROS</span></div>
<div class="t" style="left:482px;top:210px;color:#1e1e1e">Cuentas asignadas</div>
<div class="a" style="left:475px;top:229px;width:429px;height:414px;border-top:1px solid #a0a0a0;border-left:1px solid #a0a0a0;border-right:1px solid #fff;border-bottom:1px solid #fff"></div>
<div class="a" style="left:476px;top:230px;width:427px;height:412px;border-top:1px solid #696969;border-left:1px solid #696969;border-right:1px solid #e3e3e3;border-bottom:1px solid #e3e3e3"></div>
<div class="a" style="left:477px;top:275px;width:426px;height:366px;background:#ababab;"></div>
<div class="a" style="left:477px;top:231px;width:35px;height:21px;background:#efefef;"></div>
<div class="a" style="left:513px;top:231px;width:57px;height:21px;background:#fff;"></div>
<div class="a" style="left:571px;top:231px;width:264px;height:21px;background:#efefef;"></div>
<div class="a" style="left:836px;top:231px;width:67px;height:21px;background:#efefef;"></div>
<div class="a" style="left:512px;top:231px;width:1px;height:21px;background:#a0a0a0;"></div>
<div class="a" style="left:570px;top:231px;width:1px;height:21px;background:#a0a0a0;"></div>
<div class="a" style="left:835px;top:231px;width:1px;height:21px;background:#a0a0a0;"></div>
<div class="a" style="left:477px;top:252px;width:426px;height:1px;background:#a0a0a0;"></div>
<div class="t" style="left:513px;width:57px;text-align:center;top:235px;font-size:12px;color:#111"><span style="display:inline-block;transform:scaleX(0.955);transform-origin:50% 0;">Cuenta</span></div>
<div class="t" style="left:571px;width:264px;text-align:center;top:235px;font-size:12px;font-weight:bold;color:#111"><span style="display:inline-block;transform:scaleX(0.93);transform-origin:50% 0;">Descripcion</span></div>
<div class="t" style="left:836px;width:67px;text-align:center;top:235px;font-size:12px;font-weight:bold;color:#111"><span style="display:inline-block;transform:scaleX(0.93);transform-origin:50% 0;">Nivel</span></div>
<div class="a" style="left:477px;top:253px;width:35px;height:21px;background:#fff;"></div>
<div class="a" style="left:512px;top:253px;width:1px;height:21px;background:#a0a0a0;"></div>
<div class="a" style="left:513px;top:253px;width:390px;height:22px;background:#fffde6;"></div>
<div class="a" style="left:513px;top:253px;width:56px;height:20px;background:#0078d7;"></div>
<div class="a" style="left:569px;top:253px;width:2px;height:22px;background:#ffa000;"></div>
<div class="a" style="left:834px;top:253px;width:2px;height:22px;background:#ffa000;"></div>
<div class="a" style="left:901px;top:253px;width:2px;height:22px;background:#ffa000;"></div>
<div class="a" style="left:513px;top:273px;width:390px;height:2px;background:#ffa000;"></div>
<div class="a" style="left:477px;top:274px;width:36px;height:1px;background:#a0a0a0;"></div>
<div class="a" style="left:931px;top:229px;width:54px;height:36px;background:#e1e1e1;border:1px solid #adadad"></div>
<svg class="a" style="left:946px;top:229px" width="24" height="36"><path d="M20 17.5H4M10 11.5L4 17.5L10 23.5" fill="none" stroke="#5a9e3a" stroke-width="2"/></svg>
<div class="a" style="left:931px;top:274px;width:54px;height:36px;background:#e1e1e1;border:1px solid #adadad"></div>
<svg class="a" style="left:946px;top:274px" width="24" height="36"><path d="M4 17.5H20M14 11.5L20 17.5L14 23.5" fill="none" stroke="#5a9e3a" stroke-width="2"/></svg>
<div class="t" style="left:996px;top:210px;color:#1e1e1e">Cuentas</div>
<div class="a" style="left:993px;top:229px;width:340px;height:414px;border-top:1px solid #a0a0a0;border-left:1px solid #a0a0a0;border-right:1px solid #fff;border-bottom:1px solid #fff"></div>
<div class="a" style="left:994px;top:230px;width:338px;height:412px;border-top:1px solid #696969;border-left:1px solid #696969;border-right:1px solid #e3e3e3;border-bottom:1px solid #e3e3e3"></div>
<div class="a" style="left:995px;top:231px;width:320px;height:410px;background:#fff;overflow:hidden">
<div class="a" style="left:0px;top:0px;width:35px;height:21px;background:#efefef;"></div>
<div class="a" style="left:36px;top:0px;width:79px;height:21px;background:#fff;"></div>
<div class="a" style="left:116px;top:0px;width:153px;height:21px;background:#efefef;"></div>
<div class="a" style="left:270px;top:0px;width:50px;height:21px;background:#efefef;"></div>
<div class="a" style="left:35px;top:0px;width:1px;height:21px;background:#a0a0a0;"></div>
<div class="a" style="left:115px;top:0px;width:1px;height:21px;background:#a0a0a0;"></div>
<div class="a" style="left:269px;top:0px;width:1px;height:21px;background:#a0a0a0;"></div>
<div class="a" style="left:319px;top:0px;width:1px;height:21px;background:#a0a0a0;"></div>
<div class="a" style="left:0px;top:21px;width:320px;height:1px;background:#a0a0a0;"></div>
<div class="t" style="left:36px;width:79px;text-align:center;top:4px;font-size:12px;color:#111"><span style="display:inline-block;transform:scaleX(0.955);transform-origin:50% 0;">Cuenta</span></div>
<div class="t" style="left:116px;width:153px;text-align:center;top:4px;font-size:12px;font-weight:bold;color:#111"><span style="display:inline-block;transform:scaleX(0.93);transform-origin:50% 0;">Descripcion</span></div>
<div class="t" style="left:270px;width:49px;text-align:center;top:4px;font-size:12px;font-weight:bold;color:#111"><span style="display:inline-block;transform:scaleX(0.93);transform-origin:50% 0;">Nivel</span></div>
<div class="a" style="left:0px;top:22px;width:35px;height:21px;background:#fff;"></div>
<div class="a" style="left:35px;top:22px;width:1px;height:21px;background:#a0a0a0;"></div>
<div class="a" style="left:36px;top:22px;width:284px;height:22px;background:#fffde6;"></div>
<div class="a" style="left:36px;top:22px;width:78px;height:20px;background:#0078d7;"></div>
<div class="a" style="left:114px;top:22px;width:2px;height:22px;background:#ffa000;"></div>
<div class="a" style="left:268px;top:22px;width:2px;height:22px;background:#ffa000;"></div>
<div class="a" style="left:318px;top:22px;width:2px;height:22px;background:#ffa000;"></div>
<div class="a" style="left:0px;top:43px;width:35px;height:22px;background:#efefef;"></div>
<div class="a" style="left:36px;top:43px;width:284px;height:22px;background:#eef1f2;"></div>
<div class="a" style="left:115px;top:43px;width:1px;height:22px;background:#e4e6e8;"></div>
<div class="a" style="left:269px;top:43px;width:1px;height:22px;background:#e4e6e8;"></div>
<div class="t" style="left:40px;top:48px;font-size:12px;color:#111"><span style="display:inline-block;transform:scaleX(0.893);transform-origin:0 0;">0000000100</span></div>
<div class="t" style="left:120px;top:48px;font-size:12px;color:#111"><span style="display:inline-block;transform:scaleX(0.88);transform-origin:0 0;">ACTIVO</span></div>
<div class="t" style="left:270px;width:45px;text-align:right;top:48px;font-size:12px;color:#111"><span style="display:inline-block;transform:scaleX(0.88);transform-origin:100% 0;">1</span></div>
<div class="a" style="left:0px;top:65px;width:35px;height:22px;background:#efefef;"></div>
<div class="a" style="left:36px;top:65px;width:284px;height:22px;background:#fff;"></div>
<div class="a" style="left:115px;top:65px;width:1px;height:22px;background:#e4e6e8;"></div>
<div class="a" style="left:269px;top:65px;width:1px;height:22px;background:#e4e6e8;"></div>
<div class="t" style="left:40px;top:70px;font-size:12px;color:#111"><span style="display:inline-block;transform:scaleX(0.893);transform-origin:0 0;">0000000110</span></div>
<div class="t" style="left:120px;top:70px;font-size:12px;color:#111"><span style="display:inline-block;transform:scaleX(0.88);transform-origin:0 0;">CIRCULANTE</span></div>
<div class="t" style="left:270px;width:45px;text-align:right;top:70px;font-size:12px;color:#111"><span style="display:inline-block;transform:scaleX(0.88);transform-origin:100% 0;">2</span></div>
<div class="a" style="left:0px;top:87px;width:35px;height:22px;background:#efefef;"></div>
<div class="a" style="left:36px;top:87px;width:284px;height:22px;background:#eef1f2;"></div>
<div class="a" style="left:115px;top:87px;width:1px;height:22px;background:#e4e6e8;"></div>
<div class="a" style="left:269px;top:87px;width:1px;height:22px;background:#e4e6e8;"></div>
<div class="t" style="left:40px;top:92px;font-size:12px;color:#111"><span style="display:inline-block;transform:scaleX(0.893);transform-origin:0 0;">0000000120</span></div>
<div class="t" style="left:120px;top:92px;font-size:12px;color:#111"><span style="display:inline-block;transform:scaleX(0.88);transform-origin:0 0;">FIJO</span></div>
<div class="t" style="left:270px;width:45px;text-align:right;top:92px;font-size:12px;color:#111"><span style="display:inline-block;transform:scaleX(0.88);transform-origin:100% 0;">2</span></div>
<div class="a" style="left:0px;top:109px;width:35px;height:22px;background:#efefef;"></div>
<div class="a" style="left:36px;top:109px;width:284px;height:22px;background:#fff;"></div>
<div class="a" style="left:115px;top:109px;width:1px;height:22px;background:#e4e6e8;"></div>
<div class="a" style="left:269px;top:109px;width:1px;height:22px;background:#e4e6e8;"></div>
<div class="t" style="left:40px;top:114px;font-size:12px;color:#111"><span style="display:inline-block;transform:scaleX(0.893);transform-origin:0 0;">0000000130</span></div>
<div class="t" style="left:120px;top:114px;font-size:12px;color:#111"><span style="display:inline-block;transform:scaleX(0.88);transform-origin:0 0;">DIFERIDO</span></div>
<div class="t" style="left:270px;width:45px;text-align:right;top:114px;font-size:12px;color:#111"><span style="display:inline-block;transform:scaleX(0.88);transform-origin:100% 0;">2</span></div>
<div class="a" style="left:0px;top:131px;width:35px;height:22px;background:#efefef;"></div>
<div class="a" style="left:36px;top:131px;width:284px;height:22px;background:#eef1f2;"></div>
<div class="a" style="left:115px;top:131px;width:1px;height:22px;background:#e4e6e8;"></div>
<div class="a" style="left:269px;top:131px;width:1px;height:22px;background:#e4e6e8;"></div>
<div class="t" style="left:40px;top:136px;font-size:12px;color:#111"><span style="display:inline-block;transform:scaleX(0.893);transform-origin:0 0;">0000000200</span></div>
<div class="t" style="left:120px;top:136px;font-size:12px;color:#111"><span style="display:inline-block;transform:scaleX(0.88);transform-origin:0 0;">PASIVO</span></div>
<div class="t" style="left:270px;width:45px;text-align:right;top:136px;font-size:12px;color:#111"><span style="display:inline-block;transform:scaleX(0.88);transform-origin:100% 0;">1</span></div>
<div class="a" style="left:0px;top:153px;width:35px;height:22px;background:#efefef;"></div>
<div class="a" style="left:36px;top:153px;width:284px;height:22px;background:#fff;"></div>
<div class="a" style="left:115px;top:153px;width:1px;height:22px;background:#e4e6e8;"></div>
<div class="a" style="left:269px;top:153px;width:1px;height:22px;background:#e4e6e8;"></div>
<div class="t" style="left:40px;top:158px;font-size:12px;color:#111"><span style="display:inline-block;transform:scaleX(0.893);transform-origin:0 0;">0000000210</span></div>
<div class="t" style="left:120px;top:158px;font-size:12px;color:#111"><span style="display:inline-block;transform:scaleX(0.88);transform-origin:0 0;">CORTO PLAZO</span></div>
<div class="t" style="left:270px;width:45px;text-align:right;top:158px;font-size:12px;color:#111"><span style="display:inline-block;transform:scaleX(0.88);transform-origin:100% 0;">2</span></div>
<div class="a" style="left:0px;top:175px;width:35px;height:22px;background:#efefef;"></div>
<div class="a" style="left:36px;top:175px;width:284px;height:22px;background:#eef1f2;"></div>
<div class="a" style="left:115px;top:175px;width:1px;height:22px;background:#e4e6e8;"></div>
<div class="a" style="left:269px;top:175px;width:1px;height:22px;background:#e4e6e8;"></div>
<div class="t" style="left:40px;top:180px;font-size:12px;color:#111"><span style="display:inline-block;transform:scaleX(0.893);transform-origin:0 0;">0000000300</span></div>
<div class="t" style="left:120px;top:180px;font-size:12px;color:#111"><span style="display:inline-block;transform:scaleX(0.88);transform-origin:0 0;">CAPITAL</span></div>
<div class="t" style="left:270px;width:45px;text-align:right;top:180px;font-size:12px;color:#111"><span style="display:inline-block;transform:scaleX(0.88);transform-origin:100% 0;">1</span></div>
<div class="a" style="left:0px;top:197px;width:35px;height:22px;background:#efefef;"></div>
<div class="a" style="left:36px;top:197px;width:284px;height:22px;background:#fff;"></div>
<div class="a" style="left:115px;top:197px;width:1px;height:22px;background:#e4e6e8;"></div>
<div class="a" style="left:269px;top:197px;width:1px;height:22px;background:#e4e6e8;"></div>
<div class="t" style="left:40px;top:202px;font-size:12px;color:#111"><span style="display:inline-block;transform:scaleX(0.893);transform-origin:0 0;">0000000310</span></div>
<div class="t" style="left:120px;top:202px;font-size:12px;color:#111"><span style="display:inline-block;transform:scaleX(0.88);transform-origin:0 0;">CAPITAL CONTABLE</span></div>
<div class="t" style="left:270px;width:45px;text-align:right;top:202px;font-size:12px;color:#111"><span style="display:inline-block;transform:scaleX(0.88);transform-origin:100% 0;">2</span></div>
<div class="a" style="left:0px;top:219px;width:35px;height:22px;background:#efefef;"></div>
<div class="a" style="left:36px;top:219px;width:284px;height:22px;background:#eef1f2;"></div>
<div class="a" style="left:115px;top:219px;width:1px;height:22px;background:#e4e6e8;"></div>
<div class="a" style="left:269px;top:219px;width:1px;height:22px;background:#e4e6e8;"></div>
<div class="t" style="left:40px;top:224px;font-size:12px;color:#111"><span style="display:inline-block;transform:scaleX(0.893);transform-origin:0 0;">0000000400</span></div>
<div class="t" style="left:120px;top:224px;font-size:12px;color:#111"><span style="display:inline-block;transform:scaleX(0.88);transform-origin:0 0;">INGRESOS</span></div>
<div class="t" style="left:270px;width:45px;text-align:right;top:224px;font-size:12px;color:#111"><span style="display:inline-block;transform:scaleX(0.88);transform-origin:100% 0;">1</span></div>
<div class="a" style="left:0px;top:241px;width:35px;height:22px;background:#efefef;"></div>
<div class="a" style="left:36px;top:241px;width:284px;height:22px;background:#fff;"></div>
<div class="a" style="left:115px;top:241px;width:1px;height:22px;background:#e4e6e8;"></div>
<div class="a" style="left:269px;top:241px;width:1px;height:22px;background:#e4e6e8;"></div>
<div class="t" style="left:40px;top:246px;font-size:12px;color:#111"><span style="display:inline-block;transform:scaleX(0.893);transform-origin:0 0;">0000000700</span></div>
<div class="t" style="left:120px;top:246px;font-size:12px;color:#111"><span style="display:inline-block;transform:scaleX(0.88);transform-origin:0 0;">EGRESOS</span></div>
<div class="t" style="left:270px;width:45px;text-align:right;top:246px;font-size:12px;color:#111"><span style="display:inline-block;transform:scaleX(0.88);transform-origin:100% 0;">1</span></div>
<div class="a" style="left:0px;top:263px;width:35px;height:22px;background:#efefef;"></div>
<div class="a" style="left:36px;top:263px;width:284px;height:22px;background:#eef1f2;"></div>
<div class="a" style="left:115px;top:263px;width:1px;height:22px;background:#e4e6e8;"></div>
<div class="a" style="left:269px;top:263px;width:1px;height:22px;background:#e4e6e8;"></div>
<div class="t" style="left:40px;top:268px;font-size:12px;color:#111"><span style="display:inline-block;transform:scaleX(0.893);transform-origin:0 0;">0000000710</span></div>
<div class="t" style="left:120px;top:268px;font-size:12px;color:#111"><span style="display:inline-block;transform:scaleX(0.88);transform-origin:0 0;">COSTO DE VENTAS</span></div>
<div class="t" style="left:270px;width:45px;text-align:right;top:268px;font-size:12px;color:#111"><span style="display:inline-block;transform:scaleX(0.88);transform-origin:100% 0;">2</span></div>
<div class="a" style="left:0px;top:285px;width:35px;height:22px;background:#efefef;"></div>
<div class="a" style="left:36px;top:285px;width:284px;height:22px;background:#fff;"></div>
<div class="a" style="left:115px;top:285px;width:1px;height:22px;background:#e4e6e8;"></div>
<div class="a" style="left:269px;top:285px;width:1px;height:22px;background:#e4e6e8;"></div>
<div class="t" style="left:40px;top:290px;font-size:12px;color:#111"><span style="display:inline-block;transform:scaleX(0.893);transform-origin:0 0;">0000000720</span></div>
<div class="t" style="left:120px;top:290px;font-size:12px;color:#111"><span style="display:inline-block;transform:scaleX(0.88);transform-origin:0 0;">GASTOS DE OPERACION</span></div>
<div class="t" style="left:270px;width:45px;text-align:right;top:290px;font-size:12px;color:#111"><span style="display:inline-block;transform:scaleX(0.88);transform-origin:100% 0;">2</span></div>
<div class="a" style="left:0px;top:307px;width:35px;height:22px;background:#efefef;"></div>
<div class="a" style="left:36px;top:307px;width:284px;height:22px;background:#eef1f2;"></div>
<div class="a" style="left:115px;top:307px;width:1px;height:22px;background:#e4e6e8;"></div>
<div class="a" style="left:269px;top:307px;width:1px;height:22px;background:#e4e6e8;"></div>
<div class="t" style="left:40px;top:312px;font-size:12px;color:#111"><span style="display:inline-block;transform:scaleX(0.893);transform-origin:0 0;">1002000000</span></div>
<div class="t" style="left:120px;top:312px;font-size:12px;color:#111"><span style="display:inline-block;transform:scaleX(0.88);transform-origin:0 0;">BANCOS</span></div>
<div class="t" style="left:270px;width:45px;text-align:right;top:312px;font-size:12px;color:#111"><span style="display:inline-block;transform:scaleX(0.88);transform-origin:100% 0;">3</span></div>
<div class="a" style="left:0px;top:329px;width:35px;height:22px;background:#efefef;"></div>
<div class="a" style="left:36px;top:329px;width:284px;height:22px;background:#fff;"></div>
<div class="a" style="left:115px;top:329px;width:1px;height:22px;background:#e4e6e8;"></div>
<div class="a" style="left:269px;top:329px;width:1px;height:22px;background:#e4e6e8;"></div>
<div class="t" style="left:40px;top:334px;font-size:12px;color:#111"><span style="display:inline-block;transform:scaleX(0.893);transform-origin:0 0;">1002001000</span></div>
<div class="t" style="left:120px;top:334px;font-size:12px;color:#111"><span style="display:inline-block;transform:scaleX(0.88);transform-origin:0 0;">BANAMEX CHEQUES</span></div>
<div class="t" style="left:270px;width:45px;text-align:right;top:334px;font-size:12px;color:#111"><span style="display:inline-block;transform:scaleX(0.88);transform-origin:100% 0;">4</span></div>
<div class="a" style="left:0px;top:351px;width:35px;height:22px;background:#efefef;"></div>
<div class="a" style="left:36px;top:351px;width:284px;height:22px;background:#eef1f2;"></div>
<div class="a" style="left:115px;top:351px;width:1px;height:22px;background:#e4e6e8;"></div>
<div class="a" style="left:269px;top:351px;width:1px;height:22px;background:#e4e6e8;"></div>
<div class="t" style="left:40px;top:356px;font-size:12px;color:#111"><span style="display:inline-block;transform:scaleX(0.893);transform-origin:0 0;">1002002000</span></div>
<div class="t" style="left:120px;top:356px;font-size:12px;color:#111"><span style="display:inline-block;transform:scaleX(0.88);transform-origin:0 0;">BANAMEX MAESTRA</span></div>
<div class="t" style="left:270px;width:45px;text-align:right;top:356px;font-size:12px;color:#111"><span style="display:inline-block;transform:scaleX(0.88);transform-origin:100% 0;">4</span></div>
<div class="a" style="left:0px;top:373px;width:35px;height:22px;background:#efefef;"></div>
<div class="a" style="left:36px;top:373px;width:284px;height:22px;background:#fff;"></div>
<div class="a" style="left:115px;top:373px;width:1px;height:22px;background:#e4e6e8;"></div>
<div class="a" style="left:269px;top:373px;width:1px;height:22px;background:#e4e6e8;"></div>
<div class="t" style="left:40px;top:378px;font-size:12px;color:#111"><span style="display:inline-block;transform:scaleX(0.893);transform-origin:0 0;">1004000000</span></div>
<div class="t" style="left:120px;top:378px;font-size:12px;color:#111"><span style="display:inline-block;transform:scaleX(0.88);transform-origin:0 0;">DEUDORES DIVERSOS</span></div>
<div class="t" style="left:270px;width:45px;text-align:right;top:378px;font-size:12px;color:#111"><span style="display:inline-block;transform:scaleX(0.88);transform-origin:100% 0;">3</span></div>
<div class="a" style="left:0px;top:395px;width:35px;height:22px;background:#efefef;"></div>
<div class="a" style="left:36px;top:395px;width:284px;height:22px;background:#eef1f2;"></div>
<div class="a" style="left:115px;top:395px;width:1px;height:22px;background:#e4e6e8;"></div>
<div class="a" style="left:269px;top:395px;width:1px;height:22px;background:#e4e6e8;"></div>
<div class="t" style="left:40px;top:400px;font-size:12px;color:#111"><span style="display:inline-block;transform:scaleX(0.893);transform-origin:0 0;">1004001000</span></div>
<div class="t" style="left:120px;top:400px;font-size:12px;color:#111"><span style="display:inline-block;transform:scaleX(0.88);transform-origin:0 0;">LUIS MU?OHIERRO DE JUAN</span></div>
<div class="t" style="left:270px;width:45px;text-align:right;top:400px;font-size:12px;color:#111"><span style="display:inline-block;transform:scaleX(0.88);transform-origin:100% 0;">4</span></div>
<div class="a" style="left:36px;top:42px;width:284px;height:2px;background:#ffa000;"></div>
<div class="a" style="left:35px;top:43px;width:1px;height:370px;background:#a0a0a0;"></div>
<div class="a" style="left:0px;top:43px;width:35px;height:1px;background:#a0a0a0;"></div>
<div class="a" style="left:0px;top:65px;width:35px;height:1px;background:#a0a0a0;"></div>
<div class="a" style="left:0px;top:87px;width:35px;height:1px;background:#a0a0a0;"></div>
<div class="a" style="left:0px;top:109px;width:35px;height:1px;background:#a0a0a0;"></div>
<div class="a" style="left:0px;top:131px;width:35px;height:1px;background:#a0a0a0;"></div>
<div class="a" style="left:0px;top:153px;width:35px;height:1px;background:#a0a0a0;"></div>
<div class="a" style="left:0px;top:175px;width:35px;height:1px;background:#a0a0a0;"></div>
<div class="a" style="left:0px;top:197px;width:35px;height:1px;background:#a0a0a0;"></div>
<div class="a" style="left:0px;top:219px;width:35px;height:1px;background:#a0a0a0;"></div>
<div class="a" style="left:0px;top:241px;width:35px;height:1px;background:#a0a0a0;"></div>
<div class="a" style="left:0px;top:263px;width:35px;height:1px;background:#a0a0a0;"></div>
<div class="a" style="left:0px;top:285px;width:35px;height:1px;background:#a0a0a0;"></div>
<div class="a" style="left:0px;top:307px;width:35px;height:1px;background:#a0a0a0;"></div>
<div class="a" style="left:0px;top:329px;width:35px;height:1px;background:#a0a0a0;"></div>
<div class="a" style="left:0px;top:351px;width:35px;height:1px;background:#a0a0a0;"></div>
<div class="a" style="left:0px;top:373px;width:35px;height:1px;background:#a0a0a0;"></div>
<div class="a" style="left:0px;top:395px;width:35px;height:1px;background:#a0a0a0;"></div>
<div class="a" style="left:0px;top:417px;width:35px;height:1px;background:#a0a0a0;"></div>
</div>
<div class="a" style="left:1315px;top:231px;width:17px;height:410px;background:#ecedef;"></div>
<div class="a" style="left:1315px;top:231px;width:16px;height:17px;background:#ecedef;border:1px solid #a9b1b9"></div>
<svg class="a" style="left:1319px;top:237px" width="9" height="5"><path d="M0 5H9L4.5 0Z" fill="#000"/></svg>
<div class="a" style="left:1315px;top:249px;width:16px;height:81px;background:#e8eaec;border:1px solid #a9b1b9"></div>
<div class="a" style="left:1315px;top:624px;width:16px;height:17px;background:#ecedef;border:1px solid #a9b1b9"></div>
<svg class="a" style="left:1319px;top:630px" width="9" height="5"><path d="M0 0H9L4.5 5Z" fill="#000"/></svg>
</body></html>
